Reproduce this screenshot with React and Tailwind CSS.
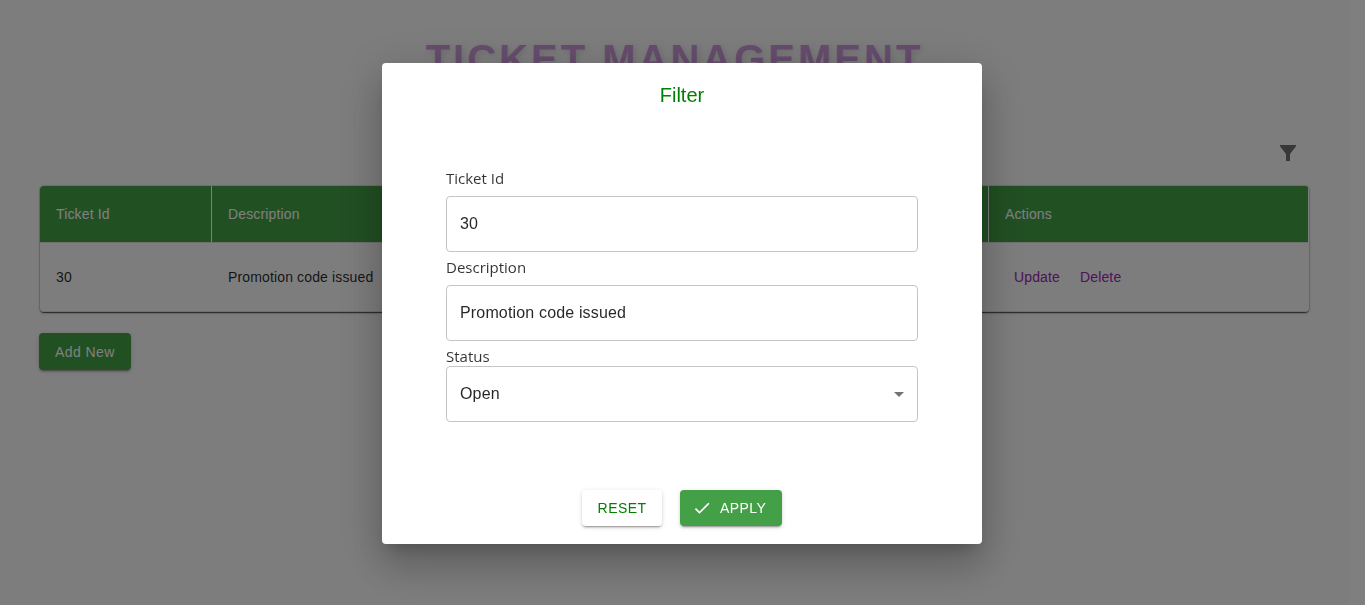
import { useState } from "react";

function FilterIcon() {
  return (
    <svg viewBox="0 0 24 24" className="size-6 fill-black/55" aria-hidden="true">
      <path d="M4 4h16v1.2L14 13v7h-4v-7L4 5.2z" />
    </svg>
  );
}

const raised =
  "shadow-[0_3px_1px_-2px_rgba(0,0,0,0.2),0_2px_2px_0_rgba(0,0,0,0.14),0_1px_5px_0_rgba(0,0,0,0.12)]";

function TicketPage() {
  return (
    <main className="mr-4 min-h-screen bg-[#fafafa] px-10 pt-[35px]">
      <h1 className="text-center text-[40px] leading-12 font-bold tracking-[3px] text-[#ce98dc] [text-shadow:2px_2px_6px_rgba(0,0,0,0.12)]">
        TICKET MANAGEMENT
      </h1>
      <div className="flex justify-end pt-14 pr-[9px]">
        <button type="button" aria-label="Filter tickets" className="my-0.5">
          <FilterIcon />
        </button>
      </div>
      <div className="mt-[19px] overflow-hidden rounded-sm pr-px shadow-[0_2px_1px_-1px_rgba(0,0,0,0.4),0_1px_1px_0_rgba(0,0,0,0.28),0_1px_3px_0_rgba(0,0,0,0.24),0_0_0_1px_rgba(0,0,0,0.08)]">
        <table className="w-full table-fixed border-separate border-spacing-0 text-left text-sm tracking-[0.01em]">
          <thead className="bg-[#43a047] text-white">
            <tr className="h-14">
              <th className="w-[172px] border-r border-white px-4 font-normal">Ticket Id</th>
              <th className="border-r border-white px-4 font-normal">Description</th>
              <th className="w-[319px] px-4 font-normal">Actions</th>
            </tr>
          </thead>
          <tbody>
            <tr className="h-[70px] text-black/85">
              <td className="border-y border-[#e0e0e0] px-4">30</td>
              <td className="border-y border-[#e0e0e0] px-4">Promotion code issued</td>
              <td className="border-y border-[#e0e0e0] px-[25px] text-[#9c27b0]">
                <div className="flex gap-5">
                  <button type="button">Update</button>
                  <button type="button">Delete</button>
                </div>
              </td>
            </tr>
          </tbody>
        </table>
      </div>
      <button
        type="button"
        className={"mt-[21px] -ml-px h-[37px] rounded-sm bg-[#43a047] px-4 text-sm tracking-[0.03em] text-white " + raised}
      >
        Add New
      </button>
    </main>
  );
}

const field =
  "block h-14 w-full rounded-sm border border-[#c4c4c4] bg-white px-[13px] text-base tracking-[0.01em] text-black/85 outline-none";
const label = "block pt-[7px] font-['Open_Sans',sans-serif] text-[15px] leading-[17px] text-black/80";

function FilterDialog() {
  const [id, setId] = useState("30");
  const [description, setDescription] = useState("Promotion code issued");
  const [status, setStatus] = useState("Open");

  return (
    <div className="fixed inset-0 flex items-center justify-center bg-black/50 pt-0.5 pr-px">
      <form
        role="dialog"
        aria-labelledby="filter-title"
        className="w-full max-w-[600px] rounded-sm bg-white pb-[18px] shadow-[0_11px_15px_-7px_rgba(0,0,0,0.2),0_24px_38px_3px_rgba(0,0,0,0.14),0_9px_46px_8px_rgba(0,0,0,0.12)]"
        onSubmit={(e) => e.preventDefault()}
      >
        <h2 id="filter-title" className="py-4 text-center text-xl leading-8 text-[#008000]">
          Filter
        </h2>
        <div className="px-16 pt-9">
          <label htmlFor="ticket-id" className={label + " pb-[9px]"}>
            Ticket Id
          </label>
          <input id="ticket-id" className={field} value={id} onChange={(e) => setId(e.target.value)} />
          <label htmlFor="description" className={label + " pb-[9px]"}>
            Description
          </label>
          <input
            id="description"
            className={field}
            value={description}
            onChange={(e) => setDescription(e.target.value)}
          />
          <label htmlFor="status" className={label + " pb-px"}>
            Status
          </label>
          <div className="relative">
            <select
              id="status"
              className={field + " appearance-none"}
              value={status}
              onChange={(e) => setStatus(e.target.value)}
            >
              <option>Open</option>
            </select>
            <svg
              viewBox="0 0 24 24"
              className="pointer-events-none absolute inset-y-4 right-[7px] size-6 fill-black/55"
              aria-hidden="true"
            >
              <path d="M7 10l5 5 5-5z" />
            </svg>
          </div>
        </div>
        <div className="flex justify-center gap-[18px] pt-[68px] text-sm tracking-[0.03em]">
          <button type="reset" className={"h-9 w-20 rounded-sm bg-white text-[#008000] " + raised}>
            RESET
          </button>
          <button
            type="submit"
            className={"flex h-9 w-[102px] items-center gap-2 rounded-sm bg-[#43a047] pl-3 font-medium text-white " + raised}
          >
            <svg viewBox="0 0 24 24" className="size-5 fill-white" aria-hidden="true">
              <path d="M9 16.17L4.83 12l-1.42 1.41L9 19 21 7l-1.41-1.41z" />
            </svg>
            APPLY
          </button>
        </div>
      </form>
    </div>
  );
}

export default function App() {
  return (
    <div className="font-['Liberation_Sans',Arial,sans-serif]">
      <TicketPage />
      <FilterDialog />
    </div>
  );
}
